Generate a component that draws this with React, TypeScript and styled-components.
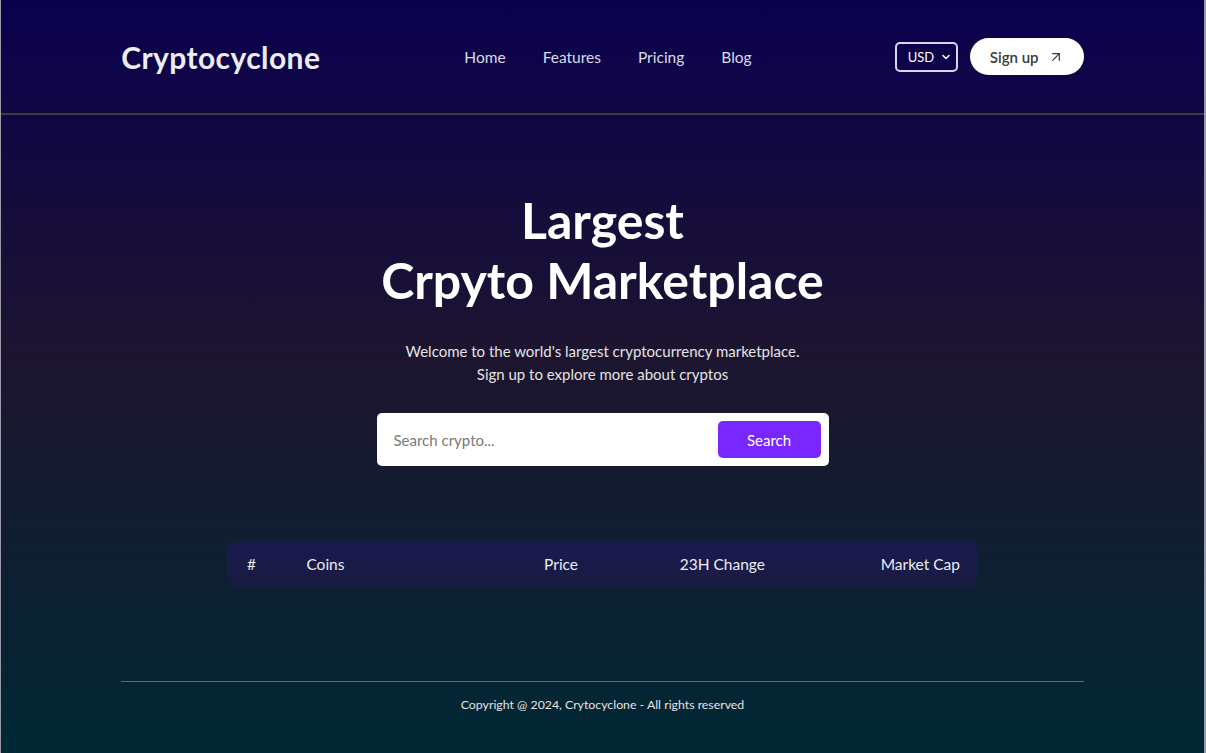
import React from "react";
import styled, { createGlobalStyle } from "styled-components";
import { ArrowUpRight, ChevronDown } from "lucide-react";

const Global = createGlobalStyle`
  * { box-sizing: border-box; margin: 0; padding: 0; }
  html, body { height: 100%; }
  body {
    font-family: "Lato", "Noto Sans", sans-serif;
    background: #0b004e;
    border-left: 1px solid #9a9aa6;
    border-right: 2px solid #9a9aa6;
  }
  #root { min-height: 100%; }
`;

const Page = styled.div`
  min-height: 753px;
  background: linear-gradient(#0b004e, #1d152f 48%, #002834);
  color: #fff;
  display: flex;
  flex-direction: column;
`;

const Navbar = styled.header`
  display: flex;
  align-items: center;
  justify-content: space-between;
  height: 115px;
  padding: 0 10%;
  border-bottom: 2px solid #3c3c3c;
`;

const Logo = styled.div`
  font-size: 30px;
  font-weight: 700;
  color: #ececf3;
  width: 200px;
  letter-spacing: 0.4px;
  white-space: nowrap;
`;

const NavList = styled.ul`
  display: flex;
  list-style: none;
  gap: 37px;
`;

const NavItem = styled.li`
  font-size: 15.5px;
  color: #dcdcec;
  cursor: pointer;
`;

const NavRight = styled.div`
  display: flex;
  align-items: center;
  gap: 12px;
`;

const SelectWrap = styled.div`
  position: relative;
  display: flex;
`;

const Currency = styled.select`
  appearance: none;
  width: 63px;
  height: 30px;
  padding: 0 0 0 11px;
  border: 2px solid #d9d6f2;
  border-radius: 5px;
  background: transparent;
  color: #fff;
  font-family: inherit;
  font-size: 13px;
  outline: none;
`;

const Chevron = styled(ChevronDown)`
  position: absolute;
  right: 6px;
  top: 9px;
  pointer-events: none;
`;

const SignUp = styled.button`
  display: flex;
  align-items: center;
  gap: 9px;
  height: 37px;
  width: 114px;
  justify-content: center;
  border: none;
  border-radius: 20px;
  background: #fff;
  color: #393939;
  font-family: inherit;
  font-size: 15px;
  font-weight: 600;
  cursor: pointer;
`;

const Hero = styled.section`
  display: flex;
  flex-direction: column;
  align-items: center;
  text-align: center;
  margin: 75px auto 0;
  max-width: 600px;
`;

const Title = styled.h1`
  font-size: 50px;
  font-weight: 700;
  line-height: 60px;
  color: #fff;
`;

const Intro = styled.p`
  margin-top: 30px;
  font-size: 15px;
  line-height: 23px;
  color: #e3e3e3;
  width: 420px;
`;

const SearchForm = styled.form`
  margin-top: 27px;
  display: flex;
  align-items: center;
  justify-content: space-between;
  width: 452px;
  height: 53px;
  padding: 8px 8px 8px 17px;
  background: #fff;
  border-radius: 5px;
`;

const SearchInput = styled.input`
  flex: 1;
  border: none;
  outline: none;
  font-family: inherit;
  font-size: 15px;
  color: #333;
  &::placeholder { color: #7a7a7a; }
`;

const SearchButton = styled.button`
  width: 103px;
  height: 37px;
  border: none;
  border-radius: 5px;
  background: #7927ff;
  color: #fff;
  font-family: inherit;
  font-size: 15px;
  cursor: pointer;
`;

const Table = styled.div`
  width: 751px;
  margin: 75px auto 0;
  border-radius: 12px;
  background: linear-gradient(rgba(84, 3, 255, 0.15), rgba(105, 2, 153, 0.15));
`;

const HeadRow = styled.div`
  display: grid;
  grid-template-columns: 0.5fr 2fr 1fr 1fr 1.5fr;
  align-items: center;
  height: 46px;
  padding: 0 18px 0 20px;
  font-size: 15.5px;
  color: #ececf3;
`;

const Cell = styled.p<{ $align?: string }>`
  text-align: ${(p) => p.$align || "left"};
`;

const Footer = styled.footer`
  margin: auto 10% 0;
  padding: 15px 0 41px;
  border-top: 1px solid #5c6d78;
  text-align: center;
  font-size: 12.3px;
  color: #e3e3e3;
`;

export default function App() {
  return (
    <>
      <Global />
      <Page>
        <Navbar>
          <Logo>Cryptocyclone</Logo>
          <NavList>
            <NavItem>Home</NavItem>
            <NavItem>Features</NavItem>
            <NavItem>Pricing</NavItem>
            <NavItem>Blog</NavItem>
          </NavList>
          <NavRight>
            <SelectWrap>
              <Currency defaultValue="usd">
                <option value="usd">USD</option>
                <option value="eur">EUR</option>
                <option value="inr">INR</option>
              </Currency>
              <Chevron size={12} strokeWidth={3} color="#fff" />
            </SelectWrap>
            <SignUp>
              Sign up <ArrowUpRight size={16} strokeWidth={1.8} />
            </SignUp>
          </NavRight>
        </Navbar>
        <Hero>
          <Title>
            Largest <br /> Crpyto Marketplace
          </Title>
          <Intro>
            Welcome to the world's largest cryptocurrency marketplace. Sign up to explore more about cryptos
          </Intro>
          <SearchForm onSubmit={(e) => e.preventDefault()}>
            <SearchInput placeholder="Search crypto..." />
            <SearchButton type="submit">Search</SearchButton>
          </SearchForm>
        </Hero>
        <Table>
          <HeadRow>
            <Cell>#</Cell>
            <Cell>Coins</Cell>
            <Cell>Price</Cell>
            <Cell $align="center">23H Change</Cell>
            <Cell $align="right">Market Cap</Cell>
          </HeadRow>
        </Table>
        <Footer>Copyright @ 2024, Crytocyclone - All rights reserved</Footer>
      </Page>
    </>
  );
}
